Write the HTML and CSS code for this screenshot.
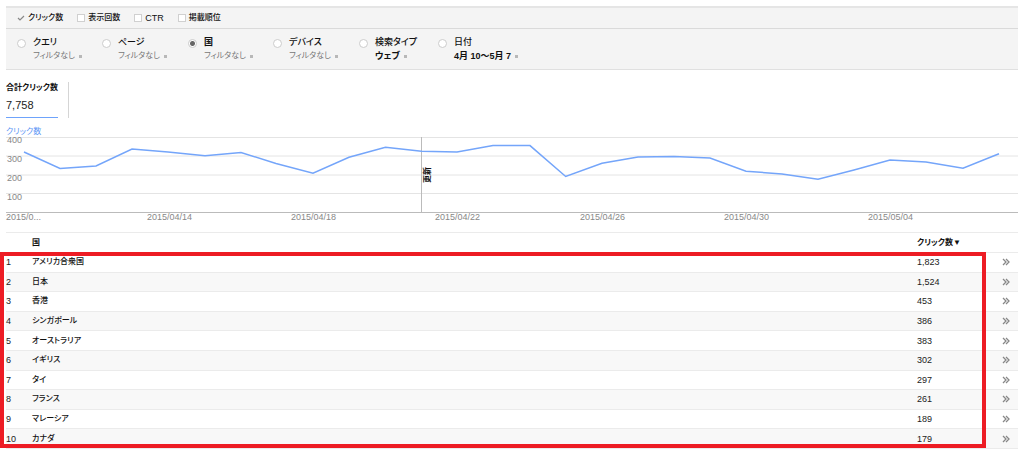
FILE: index.html
```html
<!DOCTYPE html>
<html lang="ja">
<head>
<meta charset="utf-8">
<meta name="viewport" content="width=device-width, initial-scale=1">
<title>検索アナリティクス</title>
<link rel="stylesheet" href="styles.css">
</head>
<body>
<svg width="0" height="0" class="defs" aria-hidden="true">
  <symbol id="chevrons" viewBox="0 0 8 8"><path d="M1 1L4 4L1 7M4 1L7 4L4 7"/></symbol>
</svg>
<main class="page">
  <form class="panel">
    <div class="metrics">
      <label class="metric"><input type="checkbox" class="check" checked>クリック数</label>
      <label class="metric"><input type="checkbox" class="check">表示回数</label>
      <label class="metric metric-latin"><input type="checkbox" class="check">CTR</label>
      <label class="metric"><input type="checkbox" class="check">掲載順位</label>
    </div>
    <div class="filters">
      <div class="filter"><input type="radio" name="dim" id="d1" class="radio"><div><label for="d1">クエリ</label><button type="button" class="pick">フィルタなし<span class="mark"></span></button></div></div>
      <div class="filter"><input type="radio" name="dim" id="d2" class="radio"><div><label for="d2">ページ</label><button type="button" class="pick">フィルタなし<span class="mark"></span></button></div></div>
      <div class="filter"><input type="radio" name="dim" id="d3" class="radio" checked><div><label for="d3" class="strong">国</label><button type="button" class="pick">フィルタなし<span class="mark"></span></button></div></div>
      <div class="filter"><input type="radio" name="dim" id="d4" class="radio"><div><label for="d4">デバイス</label><button type="button" class="pick">フィルタなし<span class="mark"></span></button></div></div>
      <div class="filter"><input type="radio" name="dim" id="d5" class="radio"><div><label for="d5">検索タイプ</label><button type="button" class="pick pick-set">ウェブ<span class="mark"></span></button></div></div>
      <div class="filter"><input type="radio" name="dim" id="d6" class="radio"><div><label for="d6">日付</label><button type="button" class="pick pick-set">4月 10～5月 7<span class="mark"></span></button></div></div>
    </div>
  </form>

  <section class="summary">
    <div class="total">
      <h2 class="total-name">合計クリック数</h2>
      <div class="total-value">7,758</div>
    </div>
  </section>

  <section class="chart">
    <div class="series">クリック数</div>
    <div class="plot">
      <svg class="lines" viewBox="6 137 1012 76" preserveAspectRatio="none" aria-hidden="true">
        <g class="grid"><path d="M6 137.5H1018M6 156H1018M6 175H1018M6 193.5H1018"/></g>
        <path class="axis" d="M6 212.5H1018"/>
        <path class="axis" d="M421.5 137V212"/>
        <polyline class="trend" points="24,152 60,168.5 96,166 132,149 168,152 205,155.7 241,152.5 276,163.5 313,173.2 349,157.3 385.5,147.2 421.5,151.2 457,152 493,145.6 530,145.6 565.7,176.5 602,163.2 638,157 674,156.5 710,158 746,171.2 782,174 818,179.3 854,170 890,160 926,162 963,168.3 999,153.8"/>
      </svg>
      <div class="scale"><span>400</span><span>300</span><span>200</span><span>100</span></div>
      <div class="note">更新</div>
    </div>
    <div class="dates"><span>2015/0...</span><span>2015/04/14</span><span>2015/04/18</span><span>2015/04/22</span><span>2015/04/26</span><span>2015/04/30</span><span>2015/05/04</span></div>
  </section>

  <section class="results">
    <table class="table">
      <colgroup><col class="c-rank"><col><col class="c-count"><col class="c-more"></colgroup>
      <thead><tr><th></th><th>国</th><th>クリック数▼</th><th></th></tr></thead>
      <tbody>
        <tr><td>1</td><td class="name">アメリカ合衆国</td><td>1,823</td><td><a href="#" class="more" aria-label="詳細"><svg><use href="#chevrons"/></svg></a></td></tr>
        <tr><td>2</td><td class="name">日本</td><td>1,524</td><td><a href="#" class="more" aria-label="詳細"><svg><use href="#chevrons"/></svg></a></td></tr>
        <tr><td>3</td><td class="name">香港</td><td>453</td><td><a href="#" class="more" aria-label="詳細"><svg><use href="#chevrons"/></svg></a></td></tr>
        <tr><td>4</td><td class="name">シンガポール</td><td>386</td><td><a href="#" class="more" aria-label="詳細"><svg><use href="#chevrons"/></svg></a></td></tr>
        <tr><td>5</td><td class="name">オーストラリア</td><td>383</td><td><a href="#" class="more" aria-label="詳細"><svg><use href="#chevrons"/></svg></a></td></tr>
        <tr><td>6</td><td class="name">イギリス</td><td>302</td><td><a href="#" class="more" aria-label="詳細"><svg><use href="#chevrons"/></svg></a></td></tr>
        <tr><td>7</td><td class="name">タイ</td><td>297</td><td><a href="#" class="more" aria-label="詳細"><svg><use href="#chevrons"/></svg></a></td></tr>
        <tr><td>8</td><td class="name">フランス</td><td>261</td><td><a href="#" class="more" aria-label="詳細"><svg><use href="#chevrons"/></svg></a></td></tr>
        <tr><td>9</td><td class="name">マレーシア</td><td>189</td><td><a href="#" class="more" aria-label="詳細"><svg><use href="#chevrons"/></svg></a></td></tr>
        <tr><td>10</td><td class="name">カナダ</td><td>179</td><td><a href="#" class="more" aria-label="詳細"><svg><use href="#chevrons"/></svg></a></td></tr>
      </tbody>
    </table>
    <div class="highlight"></div>
  </section>
</main>
</body>
</html>
```
FILE: styles.css
```css
* { box-sizing: border-box; }

body {
  margin: 0;
  background: #fff;
  color: #222;
  font: 9px/14px "Liberation Sans", "Noto Sans CJK JP", sans-serif;
  font-feature-settings: "palt";
}

.defs { display: block; }

.page { padding: 6px 6px 0; }

.panel {
  background: #f4f4f4;
  border-top: 2px solid #e5e5e5;
  border-bottom: 1px solid #e0e0e0;
}

.metrics {
  display: flex;
  gap: 14px;
  height: 21px;
  padding: 0 11px;
  align-items: center;
  border-bottom: 1px solid #dadada;
}

.metric {
  display: flex;
  align-items: center;
  gap: 3px;
  color: #111;
  font-size: 8px;
  font-weight: 500;
}

.metric-latin { font-size: 9px; }

.check {
  appearance: none;
  width: 8px;
  height: 8px;
  margin: 0;
  border: 1px solid #d0d0d0;
  background: #fff;
}

.check:checked {
  border-color: transparent;
  background: transparent url("data:image/svg+xml,%3Csvg xmlns='http://www.w3.org/2000/svg' viewBox='0 0 8 8'%3E%3Cpath d='M1 4l2 2 4-4' fill='none' stroke='%23888' stroke-width='1.2'/%3E%3C/svg%3E") center / 8px 8px no-repeat;
  background-origin: border-box;
}

.filters {
  display: grid;
  grid-template-columns: 85px 86px 85px 86px 79px auto;
  justify-content: start;
  padding: 6px 11px;
}

.filter {
  display: flex;
  align-items: flex-start;
  gap: 7px;
}

.filter label { display: block; color: #111; font-weight: 500; }
.filter .strong { font-weight: 700; }

.radio {
  appearance: none;
  width: 9px;
  height: 9px;
  margin: 4px 0 0;
  border: 1px solid #ccc;
  border-radius: 50%;
  background: #fff;
}

.radio:checked { background: radial-gradient(circle, #666 0 2px, #fff 3px); }

.pick {
  display: flex;
  align-items: center;
  gap: 4px;
  padding: 0;
  border: 0;
  background: none;
  color: #777;
  font: inherit;
  font-size: 8px;
  font-feature-settings: inherit;
  white-space: nowrap;
}

.pick-set { color: #111; font-weight: 700; }
.pick-set { font-size: 9px; }
.mark { width: 3px; height: 3px; background: #b8b8b8; }

.summary { display: flex; padding-top: 12px; }

.total {
  padding-right: 10px;
  border-right: 1px solid #d5d5d5;
}

.total-name {
  margin: 0;
  font-size: 8px;
  line-height: 12px;
  font-weight: 700;
  color: #111;
}

.total-value {
  padding: 4px 0;
  border-bottom: 1px solid #6ea3fb;
  font-size: 11px;
  line-height: 15px;
}

.chart { padding-top: 7px; }

.series {
  height: 12px;
  color: #5b95f5;
  font-size: 8px;
}

.plot { position: relative; }
.lines { display: block; width: 100%; height: 76px; }
.lines path, .lines polyline { fill: none; vector-effect: non-scaling-stroke; }
.lines .grid { stroke: #e4e4e4; }
.lines .axis { stroke: #bbb; }
.lines .trend { stroke: #74a5fa; stroke-width: 1.5; }

.scale {
  position: absolute;
  inset: -4px auto 4px 1px;
  display: grid;
  grid-template-rows: repeat(4, 1fr);
  color: #888;
}

.note {
  position: absolute;
  left: 41%;
  top: 30px;
  margin-left: 2px;
  color: #111;
  font-size: 8px;
  line-height: 10px;
  font-weight: 700;
  writing-mode: vertical-rl;
  text-orientation: sideways;
  transform: rotate(180deg);
}

.dates {
  display: grid;
  grid-template-columns: 141fr 144fr 144fr 145fr 144fr 144fr 150fr;
  line-height: 9px;
  color: #888;
}

.results { position: relative; padding-top: 10px; }

.table {
  width: 100%;
  height: 217px;
  border-collapse: collapse;
  table-layout: fixed;
}

.c-rank { width: 26px; }
.c-count { width: 85px; }
.c-more { width: 16px; }

.table th, .table td {
  padding: 0;
  border-top: 1px solid #ebebeb;
  text-align: left;
  line-height: 14px;
  white-space: nowrap;
}

.table th { height: 20px; color: #111; font-size: 8px; font-weight: 700; }
.table td { color: #222; }
.table .name { font-size: 8px; font-weight: 500; color: #111; }
.table tbody tr:nth-child(even) { background: #f8f8f8; }
.table tbody tr:last-child td { border-bottom: 1px solid #ebebeb; }

.more { display: block; width: 8px; height: 8px; }
.more svg { display: block; width: 8px; height: 8px; fill: none; stroke: #888; stroke-width: 1.3; }

.highlight {
  position: absolute;
  inset: 30px 32px 1px -6px;
  border: 4px solid #ed1c24;
  pointer-events: none;
}
```
